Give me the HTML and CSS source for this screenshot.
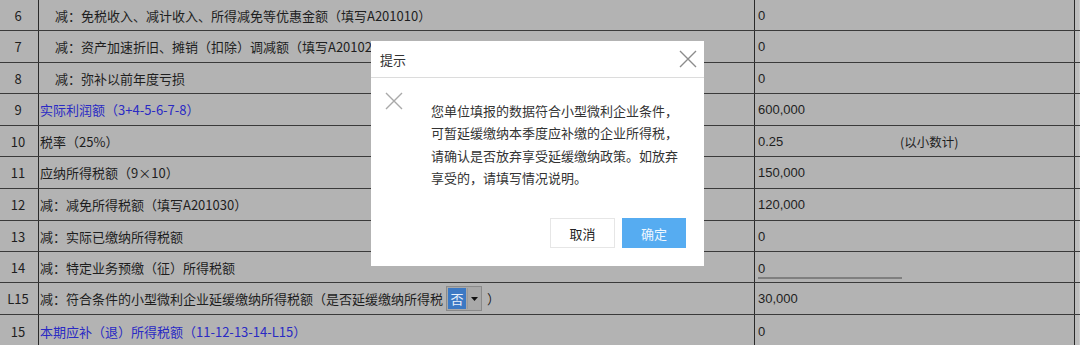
FILE: index.html
```html
<!DOCTYPE html>
<html lang="zh-CN">
<head>
<meta charset="utf-8">
<title>提示</title>
<link rel="stylesheet" href="styles.css">
</head>
<body>
<div class="sheet">
  <div class="grid">
    <div class="row r31"><div class="num">6</div><div class="label indent">减：免税收入、减计收入、所得减免等优惠金额（填写A201010）</div><div class="val">0</div><div class="strip"></div></div>
    <div class="row r32"><div class="num">7</div><div class="label indent">减：资产加速折旧、摊销（扣除）调减额（填写A201020）</div><div class="val">0</div><div class="strip"></div></div>
    <div class="row r31"><div class="num">8</div><div class="label indent">减：弥补以前年度亏损</div><div class="val">0</div><div class="strip"></div></div>
    <div class="row r32"><div class="num">9</div><div class="label blue">实际利润额（3+4-5-6-7-8）</div><div class="val">600,000</div><div class="strip"></div></div>
    <div class="row r31"><div class="num">10</div><div class="label">税率（25%）</div><div class="val"><span class="v1">0.25</span><span class="note">(以小数计)</span></div><div class="strip"></div></div>
    <div class="row r32"><div class="num">11</div><div class="label">应纳所得税额（9×10）</div><div class="val">150,000</div><div class="strip"></div></div>
    <div class="row r32"><div class="num">12</div><div class="label">减：减免所得税额（填写A201030）</div><div class="val">120,000</div><div class="strip"></div></div>
    <div class="row r31"><div class="num">13</div><div class="label">减：实际已缴纳所得税额</div><div class="val">0</div><div class="strip"></div></div>
    <div class="row r31"><div class="num">14</div><div class="label">减：特定业务预缴（征）所得税额</div><div class="val"><span class="field">0</span></div><div class="strip"></div></div>
    <div class="row r32"><div class="num">L15</div><div class="label">减：符合条件的小型微利企业延缓缴纳所得税额（是否延缓缴纳所得税 <span class="select"><span class="sel-val">否</span><span class="sel-btn"><svg width="7" height="4" viewBox="0 0 7 4"><path d="M0 0H7L3.5 4Z" fill="#111"/></svg></span></span> ）</div><div class="val">30,000</div><div class="strip"></div></div>
    <div class="row r31 last"><div class="num">15</div><div class="label blue">本期应补（退）所得税额（11-12-13-14-L15）</div><div class="val">0</div><div class="strip"></div></div>
  </div>

  <div class="dialog">
    <div class="dlg-head">
      <span class="dlg-title">提示</span>
      <svg class="dlg-close" width="18" height="18" viewBox="0 0 18 18"><path d="M1 1L17 17M17 1L1 17" stroke="#8c8c8c" stroke-width="1.4" fill="none"/></svg>
    </div>
    <div class="dlg-body">
      <svg class="dlg-icon" width="18" height="18" viewBox="0 0 18 18"><path d="M1 1L17 17M17 1L1 17" stroke="#a9a9a9" stroke-width="1.4" fill="none"/></svg>
      <p class="dlg-msg">您单位填报的数据符合小型微利企业条件，<br>可暂延缓缴纳本季度应补缴的企业所得税，<br>请确认是否放弃享受延缓缴纳政策。如放弃<br>享受的，请填写情况说明。</p>
    </div>
    <div class="dlg-foot">
      <button class="btn cancel">取消</button>
      <button class="btn ok">确定</button>
    </div>
  </div>
</div>
</body>
</html>
```

FILE: styles.css
```css
* { box-sizing: border-box; }
html, body {
  margin: 0;
  padding: 0;
  width: 1080px;
  height: 345px;
  overflow: hidden;
  background: #b3b3b3;
  font-family: "Liberation Sans", "Noto Sans CJK SC", sans-serif;
  font-size: 13px;
  color: #1e1e1e;
}
.sheet {
  position: relative;
  width: 1080px;
  height: 345px;
}
.grid {
  display: flex;
  flex-direction: column;
}
.row {
  display: flex;
  align-items: stretch;
  border-bottom: 1px solid #3a3a3a;
}
.row.r31 { height: 31px; }
.row.r32 { height: 32px; }
.row.last { border-bottom: none; height: 32px; }
.num {
  width: 39px;
  flex: none;
  border-right: 1px solid #2a2a2a;
  display: flex;
  align-items: center;
  justify-content: center;
  padding-right: 2px;
  font-family: "Noto Sans CJK SC", "Liberation Sans", sans-serif;
}
.label {
  width: 716px;
  flex: none;
  border-right: 1px solid #2a2a2a;
  display: flex;
  align-items: center;
  padding-left: 1px;
  font-family: "Noto Sans CJK TC", "Noto Sans CJK SC", sans-serif;
  white-space: nowrap;
  overflow: hidden;
}
.label.indent { padding-left: 16px; }
.label.blue { color: #2a2ac4; }
.val {
  width: 320px;
  flex: none;
  border-right: 1px solid #2a2a2a;
  display: flex;
  align-items: center;
  padding-left: 3px;
  font-family: "Liberation Sans", "Noto Sans CJK SC", sans-serif;
}
.v1 { width: 142px; }
.note { font-family: "Noto Sans CJK SC", sans-serif; font-size: 12.5px; }
.field {
  display: inline-block;
  width: 144px;
  border-bottom: 2px solid #7f7f7f;
  line-height: 16px;
  margin-top: 6px;
}
.strip {
  flex: 1;
  background: #bdbdbd;
  border-right: 1px solid #c9c9c9;
}
.select {
  display: inline-flex;
  height: 25px;
  width: 36px;
  border: 1px solid #8a8a8a;
  margin: 0 5px 0 3px;
  background: #a8a8a8;
  padding: 1px;
  gap: 1px;
}
.sel-val {
  width: 18px;
  background: #3c79c4;
  color: #e9f1fb;
  display: flex;
  align-items: center;
  justify-content: center;
  font-size: 13px;
  font-family: "Noto Sans CJK SC", sans-serif;
}
.sel-btn {
  flex: 1;
  background: #a9a9a9;
  display: flex;
  align-items: center;
  justify-content: center;
  border-left: 1px solid #9a9a9a;
}
.dialog {
  position: absolute;
  left: 371px;
  top: 41px;
  width: 333px;
  height: 225px;
  background: #fff;
  display: flex;
  flex-direction: column;
}
.dlg-head {
  height: 37px;
  border-bottom: 1px solid #dcdcdc;
  display: flex;
  align-items: center;
  justify-content: space-between;
  padding: 0 7px 0 9px;
}
.dlg-title {
  font-family: "Noto Sans CJK SC", sans-serif;
  font-size: 13px;
  color: #333;
}
.dlg-body {
  display: flex;
  padding: 14px 0 0 14px;
  height: 140px;
}
.dlg-icon { flex: none; }
.dlg-msg {
  margin: 8px 0 0 28px;
  font-family: "Noto Sans CJK TC", "Noto Sans CJK SC", sans-serif;
  font-size: 13px;
  line-height: 22.3px;
  color: #333;
  white-space: nowrap;
}
.dlg-foot {
  display: flex;
  justify-content: flex-end;
  gap: 7px;
  padding: 0 18px 0 0;
}
.btn {
  height: 30px;
  width: 65px;
  font-family: "Noto Sans CJK SC", sans-serif;
  font-size: 13px;
  border: 1px solid #e6e6e6;
  background: #fff;
  color: #222;
  padding: 0;
}
.btn.ok {
  width: 64px;
  background: #56acf1;
  border-color: #56acf1;
  color: #eef7ff;
}
```
